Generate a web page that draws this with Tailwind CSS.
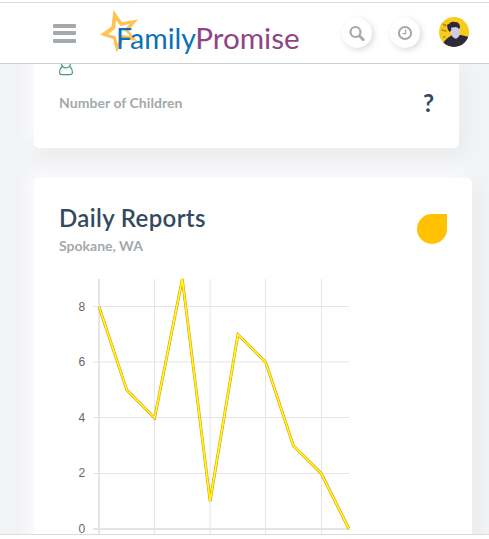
<!DOCTYPE html>
<html lang="en">
<head>
<meta charset="utf-8">
<title>Family Promise</title>
<script src="https://cdn.jsdelivr.net/npm/@tailwindcss/browser@4"></script>
</head>
<body class="flex h-[539px] w-[489px] flex-col overflow-hidden bg-white pt-[2px] font-['Lato',sans-serif]">
<header class="relative z-10 flex h-[62px] shrink-0 items-center border-t border-b border-t-[#dcdcdc] border-b-[#cecece] bg-white">
  <button class="ml-[53px] flex w-[23px] flex-col gap-[3.5px]" aria-label="Menu">
    <span class="h-1 w-[23px] rounded-[1px] bg-[#a3a9ac]"></span>
    <span class="h-1 w-[23px] rounded-[1px] bg-[#a3a9ac]"></span>
    <span class="h-1 w-[23px] rounded-[1px] bg-[#a3a9ac]"></span>
  </button>
  <svg class="ml-[22px] h-[60px] w-[204px]" viewBox="98 3 204 60" role="img" aria-label="FamilyPromise">
    <path fill="#ffc254" fill-rule="evenodd" d="M113.500 10L122 22.200L138 19.500L128.500 30.500L137 41L123.500 39L116.500 52.500L113 39L100 34.800L111.500 26.500ZM116 20L115.200 28.800L108 34.300L115.500 36L117.500 43.500L122 35L130 36L124.300 29.900L129.500 24L120.500 25.900Z"/>
    <g font-family="Lato, sans-serif" font-size="28.500">
      <text x="116" y="48.500" textLength="80" lengthAdjust="spacingAndGlyphs" fill="#0871b9">Family</text>
      <text x="195.200" y="48.500" textLength="104.500" lengthAdjust="spacingAndGlyphs" fill="#8e4585">Promise</text>
    </g>
  </svg>
  <button class="ml-[40px] flex size-[30px] items-center justify-center rounded-full bg-white shadow-[2px_2px_6px_#00000026]" aria-label="Search">
    <svg class="size-4" viewBox="0 0 16 16" fill="none" stroke="#a3a9ac"><circle cx="6.500" cy="7" r="5" stroke-width="2.200"/><path d="M10.300 10.800l4 4" stroke-width="2.700" stroke-linecap="round"/></svg>
  </button>
  <button class="ml-[18px] flex size-[30px] items-center justify-center rounded-full bg-white shadow-[2px_2px_6px_#00000026]" aria-label="History">
    <svg class="size-4" viewBox="0 0 16 16" fill="none" stroke="#a3a9ac"><circle cx="8" cy="8" r="6.100" stroke-width="2"/><path d="M8.700 4.500v4.200H5.500" stroke-width="1.300"/></svg>
  </button>
  <svg class="mb-[2px] ml-[19px] size-[30px]" viewBox="0 0 30 30" role="img" aria-label="Profile">
    <defs><clipPath id="avatar"><circle cx="15" cy="15" r="15"/></clipPath></defs>
    <g clip-path="url(#avatar)">
      <path fill="#f9cc1c" d="M0 0h30v30H0z"/>
      <g fill="none" stroke="#b88b1b" stroke-linecap="round"><path d="M4 7l2 2m-3 4l4 1" stroke-width="1.300"/><circle cx="5" cy="20" r=".8"/><circle cx="6" cy="8" r=".7"/></g>
      <path fill="#2c293d" d="M3 30V28Q5 23 13 18L22 18L30 20V30Z"/>
      <path fill="#d2cce0" d="M11 9h9.800v7q0 3-2 4.500Q17.500 22.500 15 21Q12 19 11.500 15Z"/>
      <path fill="#2c293d" d="M10.500 15Q8 12 8 8Q10 7 11 6Q13 4 16 5Q21 5 21 10.500L20 12Q18 9 14 10.500L12 10.500Q13 14 10.500 15Z"/>
    </g>
  </svg>
</header>
<main class="h-[470px] shrink-0 overflow-hidden bg-[#f2f3f5] pl-[34px]">
  <section class="relative flex h-[84px] w-[425px] flex-col rounded-b-[5px] bg-white px-[25px] shadow-[6px_6px_18px_#0000000a,-6px_-6px_16px_#ffffffcc]">
    <svg class="h-[12px] w-[14px] shrink-0" viewBox="0 0 14 12" fill="none" stroke="#429d78" stroke-width="1.200"><path d="M2.500 0Q3.300 3.500 7 4Q10.800 3.500 11.500 0M3 2.500Q.6 5 .6 8.500Q.6 10.600 3 10.600H11Q13.400 10.600 13.400 8.500Q13.400 5 11 2.500"/></svg>
    <div class="mt-[11px] flex h-8 items-center justify-between">
      <h3 class="text-[14px] leading-5 font-bold tracking-[0.05px] text-[#a3a9ac]">Number of Children</h3>
      <span class="text-[24px] leading-8 font-bold text-[#34495e]">?</span>
    </div>
  </section>
  <section class="relative mt-[30px] h-[380px] w-[438px] rounded-[5px] bg-white pl-[25px] shadow-[6px_6px_18px_#0000000a,-6px_-6px_16px_#ffffffcc]">
    <div class="flex h-[92px] items-start justify-between pt-[24px] pr-[25px]">
      <div>
        <h2 class="text-[24px] leading-8 font-semibold tracking-[0.35px] text-[#34495e]">Daily Reports</h2>
        <p class="mt-[2px] text-[14px] leading-5 font-bold text-[#a3a9ac]">Spokane, WA</p>
      </div>
      <span class="mt-[12px] size-[30px] rounded-full rounded-tr-none bg-[#ffc100]"></span>
    </div>
    <svg class="h-[280px] w-[300px]" viewBox="59 270 300 280" role="img" aria-label="Daily reports chart">
      <g fill="none" stroke="#e5e5e5">
        <path d="M93 306.500H349M93 362H349M93 417.500H349M93 473.500H349M154.500 279V535M210 279V535M265.500 279V535M321.500 279V535"/>
        <path stroke-width="2" d="M99 279V535M93 529H349"/>
      </g>
      <g fill="#666" font-family="Liberation Sans, sans-serif" font-size="12" text-anchor="end">
        <text x="85.300" y="310.500">8</text><text x="85.300" y="366.200">6</text><text x="85.300" y="421.700">4</text><text x="85.300" y="477.300">2</text><text x="85.300" y="533">0</text>
      </g>
      <g fill="none">
        <path stroke="#d98c36" stroke-width="2.800" d="M99 306.800L126.800 390.100L154.600 417.900L182.300 279L210.100 501.200L237.900 334.600L265.700 362.300L293.400 445.700L321.200 473.400L349 529"/>
        <path stroke="#ff0" stroke-width="1.700" d="M99 306.800L126.800 390.100L154.600 417.900L182.300 279L210.100 501.200L237.900 334.600L265.700 362.300L293.400 445.700L321.200 473.400L349 529"/>
      </g>
    </svg>
  </section>
</main>
<div class="h-px shrink-0 bg-[#dcdcdc]"></div>
</body>
</html>
